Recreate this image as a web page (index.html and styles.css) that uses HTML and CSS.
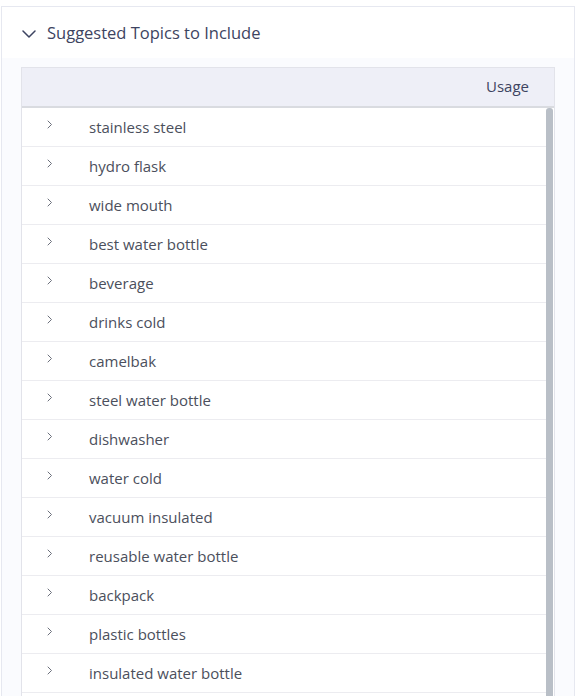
FILE: index.html
```html
<!DOCTYPE html>
<html lang="en">
<head>
    <meta charset="UTF-8">
    <meta name="viewport" content="width=device-width, initial-scale=1.0">
    <title>Suggested Topics</title>
    <link rel="stylesheet" href="styles.css">
</head>
<body>

<div class="card">
    <div class="card-header">
        <svg class="caret-down" width="14" height="8" viewBox="0 0 14 8">
            <path d="M1 1 L7 7 L13 1" fill="none" stroke="#3d4461" stroke-width="1.5" stroke-linecap="round" stroke-linejoin="round"/>
        </svg>
        <h2>Suggested Topics to Include</h2>
    </div>
    <div class="card-body">
        <div class="topics">
            <div class="topics-head">
                <span>Usage</span>
            </div>
            <div class="topics-body">
                <div class="topics-list" id="topics"></div>
                <div class="scroll-track"><div class="scroll-thumb"></div></div>
            </div>
        </div>
    </div>
</div>

<script>
    const topics = [
        'stainless steel', 'hydro flask', 'wide mouth', 'best water bottle',
        'beverage', 'drinks cold', 'camelbak', 'steel water bottle',
        'dishwasher', 'water cold', 'vacuum insulated', 'reusable water bottle',
        'backpack', 'plastic bottles', 'insulated water bottle'
    ];
    const list = document.getElementById('topics');
    topics.forEach(topic => {
        list.innerHTML += `
            <div class="topic-row">
                <svg class="caret-right" width="6" height="9" viewBox="0 0 6 9">
                    <path d="M1 1 L4.5 4.5 L1 8" fill="none" stroke="#6b6f7b" stroke-width="1" stroke-linecap="round" stroke-linejoin="round"/>
                </svg>
                <span>${topic}</span>
            </div>
        `;
    });
</script>

</body>
</html>
```

FILE: styles.css
```css
body {
    font-family: "Open Sans", Arial, sans-serif;
    background: #fff;
    margin: 0;
    padding: 6px 5px 0 1px;
    overflow: hidden;
}
.card {
    border: 1px solid #e6e8f0;
    border-bottom: none;
    background: #fff;
}
.card-header {
    display: flex;
    align-items: center;
    height: 51px;
    padding-left: 20px;
    box-sizing: border-box;
}
.caret-down {
    margin-right: 11px;
    margin-top: 2px;
}
h2 {
    margin: 0;
    font-size: 16.5px;
    font-weight: 400;
    color: #3d4461;
}
.card-body {
    background: #fafbfe;
    padding: 9px 19px 0 19px;
}
.topics {
    border: 1px solid #e2e3ea;
    border-bottom: none;
    background: #fff;
}
.topics-head {
    display: flex;
    align-items: center;
    justify-content: flex-end;
    height: 40px;
    padding-right: 25px;
    padding-bottom: 3px;
    box-sizing: border-box;
    background: #eeeff7;
    border-bottom: 2px solid #d9dbe0;
    font-size: 15px;
    color: #3d4461;
}
.topics-body {
    display: flex;
    height: 620px;
}
.topics-list {
    flex: 1;
}
.scroll-track {
    width: 8px;
    background: #fff;
}
.scroll-thumb {
    width: 7px;
    height: 100%;
    background: #b9bfc7;
    border-radius: 3px 3px 0 0;
}
.topic-row {
    display: flex;
    align-items: center;
    height: 37px;
    padding-bottom: 1px;
    border-bottom: 1px solid #ececf0;
    font-size: 15px;
    color: #4b4f5c;
}
.caret-right {
    margin-left: 25px;
    margin-right: 36px;
    margin-top: -4px;
}
```
